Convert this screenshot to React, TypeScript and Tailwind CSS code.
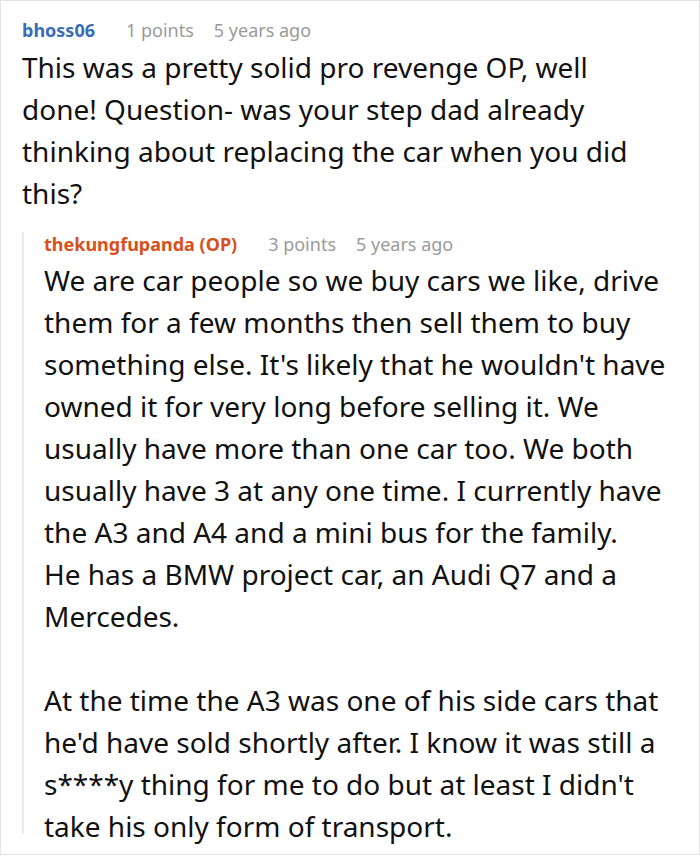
import React from 'react';

type Meta = { name: string; points: number; age: string; op?: boolean };

const CommentHeader = ({ name, points, age, op }: Meta) => (
  <div className="flex items-center text-[18px] leading-[24px]">
    <span className={op ? 'font-bold text-[#d8501b]' : 'font-bold text-[#3b6cb7]'}>{name}</span>
    <span className="ml-[31px] text-[#9a9a9a]">{points} points</span>
    <span className="ml-[20px] text-[#9a9a9a]">{age}</span>
  </div>
);

// the reference keeps its own line breaks, so each line is set on its own
const Lines = ({ lines }: { lines: string[] }) => (
  <>
    {lines.map((line, i) => (
      <span key={i} className="block min-h-[42px] whitespace-nowrap">
        {line}
      </span>
    ))}
  </>
);

const question = [
  'This was a pretty solid pro revenge OP, well',
  'done! Question- was your step dad already',
  'thinking about replacing the car when you did',
  'this?',
];

const answer = [
  'We are car people so we buy cars we like, drive',
  'them for a few months then sell them to buy',
  "something else. It's likely that he wouldn't have",
  'owned it for very long before selling it. We',
  'usually have more than one car too. We both',
  'usually have 3 at any one time. I currently have',
  'the A3 and A4 and a mini bus for the family.',
  'He has a BMW project car, an Audi Q7 and a',
  'Mercedes.',
  '',
  'At the time the A3 was one of his side cars that',
  "he'd have sold shortly after. I know it was still a",
  "s****y thing for me to do but at least I didn't",
  'take his only form of transport.',
];

const App = () => {
  return (
    <div
      className="h-[856px] w-[700px] overflow-hidden bg-white"
      style={{ fontFamily: '"Noto Sans", "Open Sans", sans-serif' }}
    >
      <div className="h-[855px] border border-[#e4e4e4] px-[21px] pt-[17px]">
        <CommentHeader name="bhoss06" points={1} age="5 years ago" />
        <p className="mt-[4px] text-[28px] leading-[42px] text-[#111]">
          <Lines lines={question} />
        </p>

        <div className="mt-[24px] h-[601px] border-l-2 border-[#e8e8e8] pl-[20px]">
          <div className="-mt-[6px]">
            <CommentHeader name="thekungfupanda (OP)" points={3} age="5 years ago" op />
          </div>
          <p className="mt-[3px] text-[28px] leading-[42px] text-[#111]">
            <Lines lines={answer} />
          </p>
        </div>
      </div>
    </div>
  );
};

export default App;
